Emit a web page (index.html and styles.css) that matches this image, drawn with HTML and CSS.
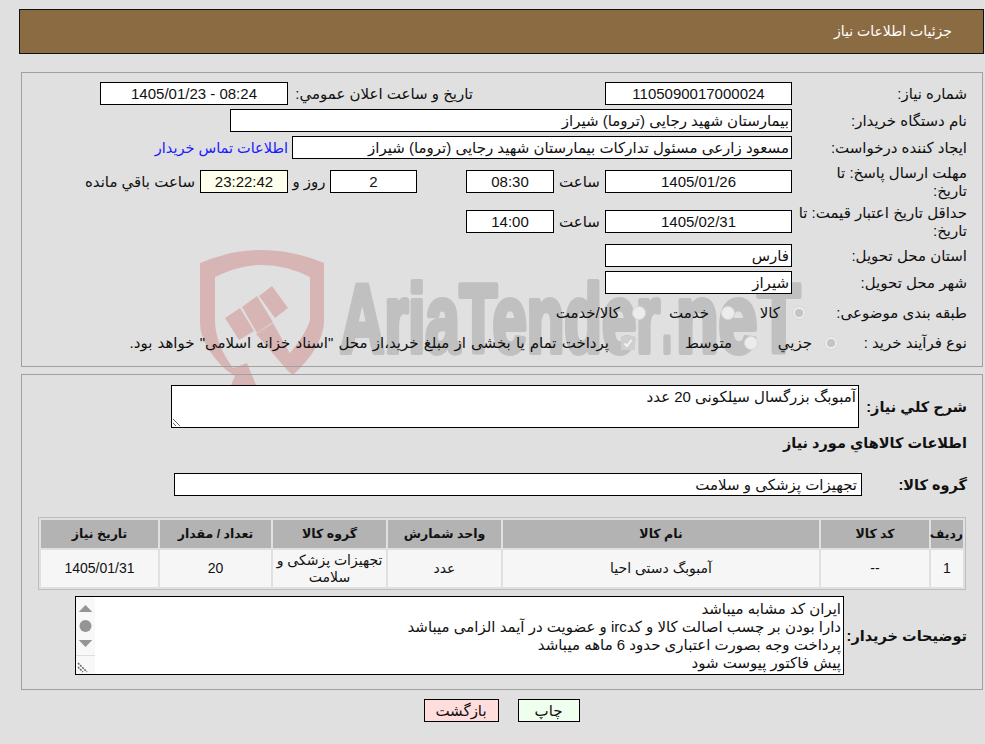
FILE: index.html
```html
<!DOCTYPE html>
<html lang="fa" dir="rtl">
<head>
<meta charset="utf-8">
<title>جزئیات اطلاعات نیاز</title>
<link rel="stylesheet" href="styles.css">
</head>
<body>
<svg class="watermark" viewBox="0 0 985 744" aria-hidden="true">
  <g class="wm-red">
    <path d="M200 263Q262 237 324 263L324 323Q322 348 293 375L284 360Q306 335 310 320L310 277Q262 253 215 277L215 322Q216 345 233 368L247 363L256 385L231 385L235 376L226 370Q200 345 200 323Z"/>
    <path d="M256 334L273 323L298 368L293 375L288 371Z"/>
    <path d="M225 318L240 308L254 331L239 340Z"/>
    <path d="M242 307L257 296L273 322L257 333Z"/>
    <path d="M259 296L272 286L288 308L275 318Z"/>
  </g>
  <text class="wm-text" x="340" y="352" textLength="320" lengthAdjust="spacingAndGlyphs">AriaTender</text>
  <text class="wm-text" x="662" y="352" textLength="10" lengthAdjust="spacingAndGlyphs">.</text>
  <text class="wm-text" x="676" y="352" textLength="124" lengthAdjust="spacingAndGlyphs">neT</text>
</svg>
<div class="page">
  <header class="title">جزئیات اطلاعات نیاز</header>

  <section class="panel panel-top">
    <div class="row">
      <div class="lbl">شماره نیاز:</div>
      <div class="fld w187 c">1105090017000024</div>
      <div class="lbl2 pub">تاریخ و ساعت اعلان عمومي:</div>
      <div class="fld w188 c">08:24 - 1405/01/23</div>
    </div>
    <div class="row">
      <div class="lbl">نام دستگاه خریدار:</div>
      <div class="fld w562">بیمارستان شهید رجایی (تروما) شیراز</div>
    </div>
    <div class="row">
      <div class="lbl">ایجاد کننده درخواست:</div>
      <div class="fld w500">مسعود زارعی مسئول تدارکات بیمارستان شهید رجایی (تروما) شیراز</div>
      <a class="contact" href="#">اطلاعات تماس خریدار</a>
    </div>
    <div class="row tall first-tall">
      <div class="lbl">مهلت ارسال پاسخ: تا<br>تاریخ:</div>
      <div class="fld w187 c">1405/01/26</div>
      <div class="unit w51">ساعت</div>
      <div class="fld w88 c">08:30</div>
      <div class="fld w87 c gap49">2</div>
      <div class="unit w42">روز و</div>
      <div class="fld w88 c timer">23:22:42</div>
      <div class="remain">ساعت باقي مانده</div>
    </div>
    <div class="row tall">
      <div class="lbl">حداقل تاریخ اعتبار قیمت: تا<br>تاریخ:</div>
      <div class="fld w187 c">1405/02/31</div>
      <div class="unit w51">ساعت</div>
      <div class="fld w88 c">14:00</div>
    </div>
    <div class="row after-tall">
      <div class="lbl">استان محل تحویل:</div>
      <div class="fld w187">فارس</div>
    </div>
    <div class="row">
      <div class="lbl">شهر محل تحویل:</div>
      <div class="fld w187">شیراز</div>
    </div>
    <div class="row opts opts-a">
      <div class="lbl">طبقه بندی موضوعی:</div>
      <span class="radio on"></span><span class="opt w-a1">کالا</span>
      <span class="radio"></span><span class="opt w-a2">خدمت</span>
      <span class="radio"></span><span class="opt">کالا/خدمت</span>
    </div>
    <div class="row opts opts-b">
      <div class="lbl">نوع فرآیند خرید :</div>
      <span class="radio on"></span><span class="opt w-b1">جزیي</span>
      <span class="radio"></span><span class="opt w-b2">متوسط</span>
      <span class="check"><svg viewBox="0 0 14 14"><path d="M3.500 7.500L6 10L10.500 4"/></svg></span>
      <span class="opt long">پرداخت تمام یا بخشی از مبلغ خرید،از محل "اسناد خزانه اسلامی" خواهد بود.</span>
    </div>
  </section>

  <section class="panel panel-bottom">
    <div class="row row-desc">
      <div class="lbl strong">شرح کلي نیاز:</div>
      <textarea class="area" readonly>آمبوبگ بزرگسال سیلکونی 20 عدد</textarea>
    </div>
    <h2 class="sub strong">اطلاعات کالاهاي مورد نیاز</h2>
    <div class="row row-group">
      <div class="lbl strong">گروه کالا:</div>
      <div class="fld w688">تجهیزات پزشکی و سلامت</div>
    </div>
    <table class="items">
      <thead>
        <tr><th class="c1">ردیف</th><th class="c2">کد کالا</th><th class="c3">نام کالا</th><th class="c4">واحد شمارش</th><th class="c5">گروه کالا</th><th class="c6">تعداد / مقدار</th><th class="c7">تاریخ نیاز</th></tr>
      </thead>
      <tbody>
        <tr><td>1</td><td>--</td><td>آمبوبگ دستی احیا</td><td>عدد</td><td>تجهیزات پزشکی و سلامت</td><td>20</td><td>1405/01/31</td></tr>
      </tbody>
    </table>
    <div class="row row-notes">
      <div class="lbl strong">توضیحات خریدار:</div>
      <div class="notes">
        <div class="notes-text">ایران کد مشابه میباشد<br>دارا بودن بر چسب اصالت کالا و کدirc و عضویت در آیمد الزامی میباشد<br>پرداخت وجه بصورت اعتباری حدود 6 ماهه میباشد<br>پیش فاکتور پیوست شود</div>
        <div class="scroll">
          <svg viewBox="0 0 19 78"><path class="sb" d="M2.700 15L9.500 8L16.300 15Z"/><circle class="sb" cx="9.500" cy="29" r="6"/><path class="sb" d="M2.700 43L16.300 43L9.500 50Z"/><path class="sep" d="M0 58.500H19"/><path class="grip" d="M2 66L11 75M2 70L7 75"/></svg>
        </div>
      </div>
    </div>
  </section>

  <div class="actions">
    <button class="btn print" type="button">چاپ</button>
    <button class="btn back" type="button">بازگشت</button>
  </div>
</div>
</body>
</html>
```

FILE: styles.css
```css
* { box-sizing: border-box; }
html, body { margin: 0; height: 744px; overflow: hidden; }
body {
  position: relative;
  background: #e0e0e0;
  color: #111;
  font-family: "Liberation Sans", "DejaVu Sans", sans-serif;
  font-size: 15px;
  line-height: 18px;
}
.watermark { position: absolute; left: 0; top: 0; width: 985px; height: 744px; z-index: 0; }
.wm-red path { fill: #d8b5b5; }
.wm-text {
  direction: ltr;
  font-family: "Liberation Sans", sans-serif;
  font-weight: 700;
  font-size: 97px;
  fill: #c0c0c0;
  stroke: #c0c0c0;
  stroke-width: 6px;
  stroke-linejoin: round;
}
.page { position: relative; z-index: 1; padding-top: 9px; }
.title {
  height: 45px;
  margin: 0 1px 0 19px;
  padding: 0 31px 0 0;
  background: #8b6b42;
  border: 1px solid #111;
  color: #fff;
  font-size: 14px;
  line-height: 43px;
}
.panel { border: 1px solid #a0a0a0; margin: 0 2px 0 21px; padding-right: 15px; }
.panel-top { margin-top: 18px; height: 295px; padding-top: 9px; }
.panel-bottom { margin-top: 7px; height: 316px; padding-top: 10px; }
.row { display: flex; align-items: center; height: 23px; margin-bottom: 4px; }
.lbl { width: 175px; flex: none; white-space: nowrap; }
.fld {
  flex: none;
  height: 23px;
  padding: 0 2px;
  background: #fff;
  border: 1px solid #000;
  line-height: 21px;
  white-space: nowrap;
  overflow: hidden;
}
.c { text-align: center; }
.w187 { width: 187px; }
.w188 { width: 188px; }
.w562 { width: 562px; }
.w500 { width: 500px; }
.w88 { width: 88px; }
.w87 { width: 87px; }
.w688 { width: 688px; padding-right: 4px; }
.w51 { width: 51px; text-align: center; }
.w42 { width: 42px; text-align: center; }
.lbl2 { width: 185px; flex: none; white-space: nowrap; }
.pub { margin-right: 132px; }
.contact { margin-right: 4px; color: #1a1aff; font-size: 14.500px; text-decoration: none; }
.tall { height: 39px; margin-bottom: 1px; }
.first-tall { margin-top: -1px; }
.after-tall { margin-top: 3px; }
.gap49 { margin-right: 49px; }
.timer { background: #ffffee; }
.remain { margin-right: 5px; white-space: nowrap; }
.opts { height: 30px; margin: 0; }
.opts-a .lbl { width: 161px; }
.opts-b .lbl { width: 129px; }
.radio {
  flex: none;
  position: relative;
  width: 14px;
  height: 14px;
  border-radius: 50%;
  background: #ececec;
  border: 1px solid #d8d8d8;
}
.radio.on::after {
  content: "";
  position: absolute;
  left: 2px;
  top: 2px;
  width: 8px;
  height: 8px;
  border-radius: 50%;
  background: #c4c4c4;
}
.opt { margin-right: 12px; white-space: nowrap; }
.long { word-spacing: 1px; }
.w-a1 { width: 45px; flex: none; }
.w-a2 { width: 63px; flex: none; }
.w-b1 { width: 54px; flex: none; }
.w-b2 { width: 97px; flex: none; }
.check { flex: none; width: 14px; height: 14px; background: #cfcfcf; }
.check svg { display: block; width: 14px; height: 14px; }
.check path { fill: none; stroke: #f2f2f2; stroke-width: 2; }
.strong { font-weight: 700; font-size: 14.500px; }
.row-desc { height: 43px; margin: 0; }
.row-desc .lbl { width: 108px; }
.area {
  display: block;
  width: 688px;
  height: 43px;
  padding: 2px 2px 0;
  border: 1px solid #000;
  border-radius: 0;
  outline: 0;
  background: #fff;
  color: #111;
  font: inherit;
  resize: vertical;
  overflow: hidden;
}
.sub { margin: 6px 0 0; height: 18px; line-height: 18px; }
.row-group { margin: 21px 0 0; }
.row-group .lbl { width: 105px; }
.items {
  direction: rtl;
  width: 927px;
  margin: 21px 1px 0 0;
  table-layout: fixed;
  border: 1px solid #bdbdbd;
  border-collapse: separate;
  border-spacing: 2px;
}
.items th { height: 28px; padding: 0; background: #b3b3b3; font-size: 12.500px; font-weight: 700; }
.items td { height: 37px; padding: 0; background: #f6f6f6; font-size: 14px; text-align: center; line-height: 17px; }
.c1 { width: 32px; }
.c2 { width: 108px; }
.c3 { width: 316px; }
.c4 { width: 113px; }
.c5 { width: 113px; }
.c6 { width: 111px; }
.c7 { width: 117px; }
.row-notes { height: 79px; margin: 6px 0 0; }
.row-notes .lbl { width: 123px; }
.notes { display: flex; width: 769px; height: 79px; background: #fff; border: 1px solid #000; overflow: hidden; }
.notes-text { flex: 1; padding: 3px 2px 0 0; white-space: nowrap; }
.scroll { flex: none; width: 19px; height: 77px; background: #f8f8f8; }
.scroll svg { display: block; width: 19px; height: 78px; }
.sb { fill: #959595; }
.sep { stroke: #ddd; fill: none; }
.grip { stroke: #666; fill: none; stroke-width: 1.500; stroke-dasharray: 2 1; }
.actions { display: flex; justify-content: center; gap: 19px; margin-top: 9px; padding-left: 18px; }
.btn {
  height: 23px;
  padding: 0;
  border: 1px solid #000;
  border-radius: 0;
  color: #111;
  font: inherit;
  line-height: 20px;
}
.back { width: 75px; background: #ffdddd; }
.print { width: 62px; background: #eeffee; }
```
